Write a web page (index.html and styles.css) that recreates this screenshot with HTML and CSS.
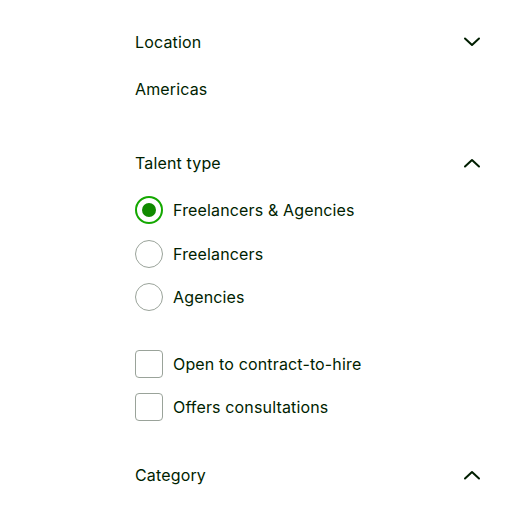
FILE: index.html
```html
<!DOCTYPE html>
<html>
<head>
<meta charset="utf-8">
<link rel="stylesheet" href="styles.css">
</head>
<body>
<div class="panel">
  <div class="section-head">
    <span>Location</span>
    <svg class="chev" width="18" height="10" viewBox="0 0 18 10"><path d="M2 1.5 L9 8 L16 1.5" fill="none" stroke="#001e00" stroke-width="2" stroke-linecap="round" stroke-linejoin="round"/></svg>
  </div>
  <div class="value">Americas</div>

  <div class="section-head talent">
    <span>Talent type</span>
    <svg class="chev" width="18" height="10" viewBox="0 0 18 10"><path d="M2 8.5 L9 2 L16 8.5" fill="none" stroke="#001e00" stroke-width="2" stroke-linecap="round" stroke-linejoin="round"/></svg>
  </div>

  <div class="options radios">
    <label class="opt"><span class="radio checked"><span class="dot"></span></span><span>Freelancers &amp; Agencies</span></label>
    <label class="opt"><span class="radio"></span><span>Freelancers</span></label>
    <label class="opt"><span class="radio"></span><span>Agencies</span></label>
  </div>

  <div class="options checks">
    <label class="opt"><span class="box"></span><span>Open to contract-to-hire</span></label>
    <label class="opt"><span class="box"></span><span>Offers consultations</span></label>
  </div>

  <div class="section-head category">
    <span>Category</span>
    <svg class="chev" width="18" height="10" viewBox="0 0 18 10"><path d="M2 8.5 L9 2 L16 8.5" fill="none" stroke="#001e00" stroke-width="2" stroke-linecap="round" stroke-linejoin="round"/></svg>
  </div>
</div>
</body>
</html>
```
FILE: styles.css
```css
html, body {
  margin: 0;
  padding: 0;
  background: #ffffff;
}
body {
  font-family: "Inter", "Liberation Sans", Arial, sans-serif;
  font-size: 16px;
  letter-spacing: 0.15px;
  color: #001e00;
}
.panel {
  width: 345px;
  margin-left: 135px;
  padding-top: 30px;
  display: flex;
  flex-direction: column;
}
.section-head {
  height: 24px;
  display: flex;
  align-items: center;
  justify-content: space-between;
  line-height: 24px;
}
.chev {
  display: block;
  margin-right: -1px;
}
.value {
  margin-top: 23px;
  height: 24px;
  line-height: 24px;
}
.talent {
  margin-top: 50px;
}
.options {
  display: flex;
  flex-direction: column;
}
.radios {
  margin-top: 21px;
  gap: 15.5px;
}
.checks {
  margin-top: 39px;
  gap: 15px;
}
.opt {
  display: flex;
  align-items: center;
  gap: 10px;
  height: 28px;
  line-height: 24px;
}
.radio {
  box-sizing: border-box;
  width: 28px;
  height: 28px;
  border: 1px solid #9aa39a;
  border-radius: 50%;
  display: flex;
  align-items: center;
  justify-content: center;
  flex: none;
}
.radio.checked {
  border: 2px solid #14a800;
}
.dot {
  width: 14px;
  height: 14px;
  border-radius: 50%;
  background: #108a00;
}
.box {
  box-sizing: border-box;
  width: 28px;
  height: 28px;
  border: 1px solid #9aa39a;
  border-radius: 4px;
  flex: none;
}
.category {
  margin-top: 42px;
}
```
